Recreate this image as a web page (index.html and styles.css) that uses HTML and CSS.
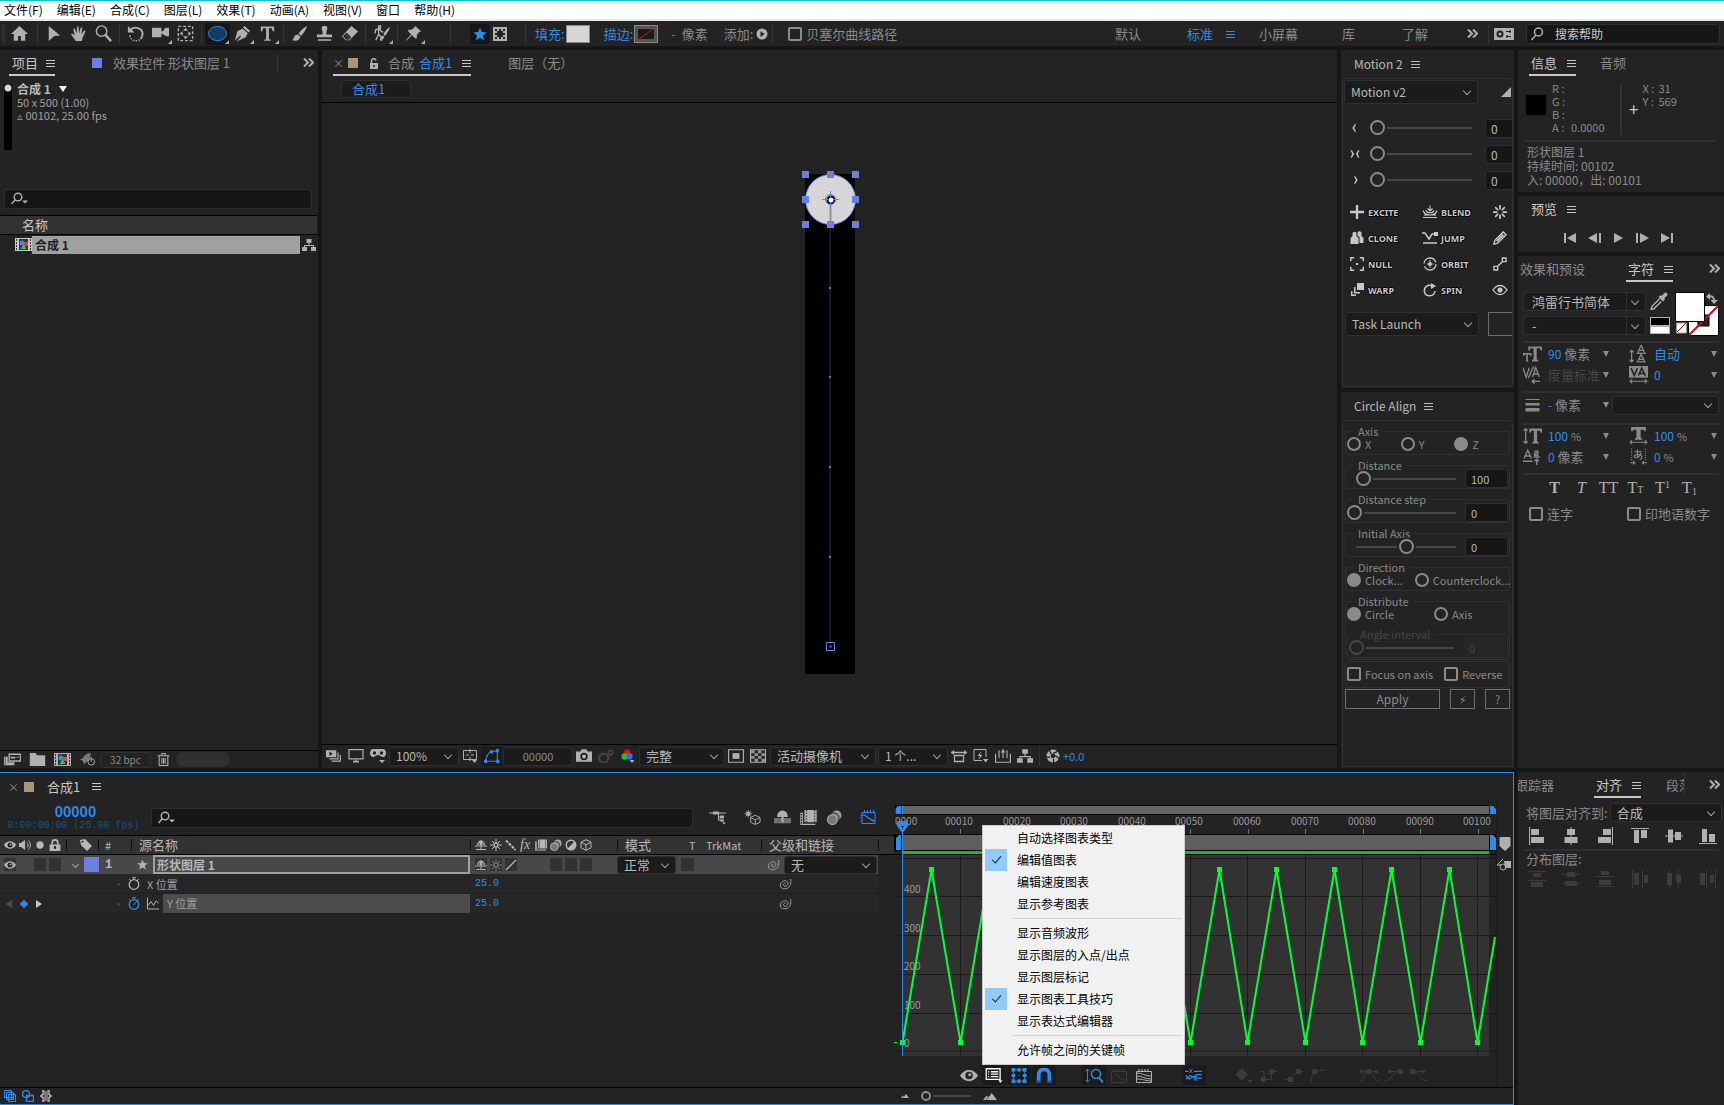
FILE: index.html
```html
<!DOCTYPE html>
<html lang="zh-CN">
<head>
  <meta charset="UTF-8">
  <meta name="viewport" content="width=device-width, initial-scale=1.0">
  <title>合成 1</title>
  <link rel="stylesheet" href="styles.css">
</head>
<body>
  <!-- icon sprite -->
  <svg class="sprite" aria-hidden="true">
    <symbol id="i-menu" viewBox="0 0 9 9"><path d="M0 1.500h9M0 4.500h9M0 7.500h9" stroke="currentColor"/></symbol>
    <symbol id="i-more" viewBox="0 0 11 9"><path d="M1 .5L5 4.5L1 8.500M6 .5L10 4.500L6 8.500" stroke="currentColor" stroke-width="2" fill="none"/></symbol>
    <symbol id="i-home" viewBox="0 0 20 20"><path d="M10 2L1 10.500h3V17.500h4.500v-5h3v5H16v-7h3z"/></symbol>
    <symbol id="i-arrow" viewBox="0 0 20 20"><path d="M5 2l12 10-6 .5L5 18z"/></symbol>
    <symbol id="i-hand" viewBox="0 0 20 20"><path d="M7 18c-1-3-4-5-5-7.500l1.500-.5L6 12 4.500 5l1.500-.5L8 10l.5-7.500h1.500l.5 7.500L12.500 3.500l1.500.5-1 7 3-4.500 1.500 1L14.500 14l-1 4z"/></symbol>
    <symbol id="i-zoom" viewBox="0 0 20 20"><circle cx="8" cy="7.500" r="5.500" fill="none" stroke="currentColor" stroke-width="1.500"/><path d="M12 11.500l6 6.500" stroke="currentColor" stroke-width="2.500"/></symbol>
    <symbol id="i-rotate" viewBox="0 0 20 20"><path d="M5 6c4-4 12-2 12.500 4 0 3-1 4-2 5.500" fill="none" stroke="currentColor" stroke-width="2"/><path d="M2 2v7h7z"/><path d="M4 12c1 7 9 7 12 3" fill="none" stroke="currentColor" stroke-width="1.500" stroke-dasharray="1.500 1.500"/></symbol>
    <symbol id="i-cam" viewBox="0 0 20 20"><path d="M1 4h10v4l2-1 2-3h4v9h-3l-3-2-2-1v4H1z"/></symbol>
    <symbol id="i-pan" viewBox="0 0 20 20"><path d="M2.500 2.500h15v15h-15z" fill="none" stroke="currentColor" stroke-width="1.500" stroke-dasharray="3 2"/><path d="M10 4l2.500 3h-5zM10 16l2.500-3h-5zM4 10l3-2.500v5zM16 10l-3-2.500v5z"/></symbol>
    <symbol id="i-ellipse" viewBox="0 0 20 20"><ellipse cx="10" cy="10" rx="9.500" ry="7.500" fill="#123c66" stroke="#2d8ceb"/></symbol>
    <symbol id="i-pen" viewBox="0 0 20 20"><path d="M12 2l6 5-1.500 2-6-5zM10 5l5.500 4.500-2 4.500-9.500 4.500L8.500 13l-1-1L2 17.500 4.500 7.500z"/></symbol>
    <symbol id="i-type" viewBox="0 0 20 20"><path d="M3 2.500h14v5h-1.500L14.500 4.500h-3v11.500l2 .5v1h-7v-1l2-.5V4.500h-3L4.500 7.500H3z"/></symbol>
    <symbol id="i-brush" viewBox="0 0 20 20"><path d="M18 2c-4 2-7 5-9 8l2.500 2.500C14 10 17 6 18 2zM8 11c-4 0-3 4-6 6 4 1 8 1 9-3.500z"/></symbol>
    <symbol id="i-stamp" viewBox="0 0 20 20"><path d="M8 9c0-2-1-3-1-4.500 0-3.500 6-3.500 6 0C13 6 12 7 12 9v2h6v3H2v-3h6zM3 16h14v1.500H3z"/></symbol>
    <symbol id="i-eraser" viewBox="0 0 20 20"><path d="M12 2l7 6-9 9H6l-4-4z"/><path d="M3 13l4-4 5 5-2.500 2.500H6.500z" fill="#333"/></symbol>
    <symbol id="i-roto" viewBox="0 0 20 20"><path d="M7 2h2v2H7zM3 10l1-4 4-1 2 3 2 .5M7 5v6l3 3v4M7 11l-3 6" fill="none" stroke="currentColor" stroke-width="1.500"/><path d="M19 3c-3 2-6 5-7 8l1.500 1.500C16 10 18 7 19 3zM11 12c-2 0-2 3-3 5 3 0 4.500-1 5-3.500z"/></symbol>
    <symbol id="i-pin" viewBox="0 0 20 20"><path d="M12 2l6 6-2 .5-2.500 3v3.500l-2 0-3-3.500-6 6-.5-.5L7.500 11 4.500 8V6h3.500l3-2.500z"/></symbol>
    <symbol id="i-star" viewBox="0 0 20 20"><path d="M10 1l2.700 6.300 6.800.5-5.200 4.500 1.700 6.700-6-3.700-6 3.700 1.700-6.700L.5 7.800l6.800-.5z"/></symbol>
    <symbol id="i-checker" viewBox="0 0 14 14"><path d="M0 0h14v14H0z"/><path d="M2 2h2v2H2zM6 2h2v2H6zM10 2h2v2h-2zM4 4h6v6H4zM2 6h2v2H2zM10 6h2v2h-2zM2 10h2v2H2zM6 10h2v2H6zM10 10h2v2h-2z" fill="#222"/></symbol>
    <symbol id="i-add" viewBox="0 0 12 12"><circle cx="6" cy="6" r="5.500"/><path d="M4.500 3l4 3-4 3z" fill="#222"/></symbol>
    <symbol id="i-sync" viewBox="0 0 20 14"><rect x="0" y="1" width="20" height="12" rx="1"/><path d="M12 4.500h5M12 9.500h5M16 3v3M13 8v3" stroke="#222"/><circle cx="6" cy="7" r="2.500" fill="none" stroke="#222" stroke-width="2"/></symbol>
    <symbol id="i-search" viewBox="0 0 18 14"><circle cx="7.500" cy="5" r="4" fill="none" stroke="currentColor" stroke-width="1.500"/><path d="M5 8l-4.500 5" stroke="currentColor" stroke-width="1.500"/></symbol>
    <symbol id="i-find" viewBox="0 0 18 14"><circle cx="7" cy="5" r="3.800" fill="none" stroke="currentColor" stroke-width="1.400"/><path d="M4.500 7.500L.5 12" stroke="currentColor" stroke-width="1.500"/><path d="M11 8.500h6l-3 3z"/></symbol>
    <symbol id="i-tree" viewBox="0 0 14 12"><path d="M4.500 0h5v4h-5zM0 8h5v4H0zM9 8h5v4H9zM6.500 4h1v2h4.500v2h-1V7H3v1H2V6h4.500z"/></symbol>
    <symbol id="i-comp" viewBox="0 0 17 13"><path d="M0 0h17v13H0z"/><path d="M4 1h9v11H4z" fill="#333"/><path d="M1.500 1v11M15.500 1v11" stroke="#333" stroke-dasharray="2 1"/><circle cx="7" cy="5" r="2.500" fill="#2d8ceb"/><path d="M9 4h4v4H9z" fill="#f33"/><path d="M8.500 6l3 5h-6z" fill="#2c4"/></symbol>
    <symbol id="i-footage" viewBox="0 0 18 12"><path d="M5.500.5h12v7h-12z" fill="none" stroke="currentColor" stroke-width="1.500"/><path d="M7 3h5v2H7zM13 3h3v1h-3zM0 3h4v6h7v3H0z"/><path d="M1.500 4v7" stroke="#222" stroke-dasharray="1 1"/></symbol>
    <symbol id="i-folder" viewBox="0 0 13 11"><path d="M0 0h5l1 2h7v9H0z"/></symbol>
    <symbol id="i-rocket" viewBox="0 0 17 14"><path d="M12 0c-5 0-8 4-9 6L0 7l3 1 2 4 2-2c3-2 5-5 5-10z" opacity=".6"/><circle cx="12.500" cy="9.500" r="3.500" fill="#232323" stroke="currentColor"/><path d="M12.500 4.500v5" stroke="currentColor"/></symbol>
    <symbol id="i-trash" viewBox="0 0 11 12"><path d="M0 2.500h11M4 2V.5h3V2M1.500 3v8.500h8V3M4 4.500V10M5.500 4.500V10M7 4.500V10" fill="none" stroke="currentColor"/></symbol>
    <symbol id="i-lockopen" viewBox="0 0 10 11"><path d="M1 5h8v6H1z"/><path d="M2.500 5V3c0-3 4-3 4.500-.5" fill="none" stroke="currentColor" stroke-width="1.500"/><path d="M5 7v2" stroke="#222" stroke-width="1.500"/></symbol>
    <symbol id="i-lock" viewBox="0 0 10 11"><path d="M0 5h10v6H0z"/><path d="M2.500 5V3c0-3 5-3 5 0v2" fill="none" stroke="currentColor" stroke-width="1.500"/><path d="M5 6.500v2.500" stroke="#222" stroke-width="2"/></symbol>
    <symbol id="i-always" viewBox="0 0 14 12"><path d="M0 1h9v6H0zM10 3h1v6H3V8h7zM12 5h1v6H5v-1h7z"/><path d="M3 2l3 2-3 2z" fill="#222"/></symbol>
    <symbol id="i-monitor" viewBox="0 0 13 12"><path d="M.5.5h12v8H.5z" fill="none" stroke="currentColor"/><path d="M6 9h1v1h2v1.500H4V10h2z"/></symbol>
    <symbol id="i-mask" viewBox="0 0 16 14"><path d="M3 0h10c4 0 4 8 0 8-2 0-3-2-5-2S5 8 3 8C-1 8-1 0 3 0zM9 11h6l-3 3z"/><circle cx="4.500" cy="4" r="1.700" fill="#222"/><circle cx="11.500" cy="4" r="1.700" fill="#222"/></symbol>
    <symbol id="i-guides" viewBox="0 0 14 14"><path d="M.5 1.500h13v9H.5zM7 0v4M7 8v4M3 6h3M8 6h3" fill="none" stroke="currentColor"/><path d="M9 11h5l-2.500 3z"/></symbol>
    <symbol id="i-shape" viewBox="0 0 15 13"><path d="M1.500 11.500h11V2H7C3 4 2 7 1.500 11.500z" fill="none" stroke="currentColor"/><path d="M0 10h3v3H0zM11.500 10h3v3h-3zM11 0h3v3h-3zM5.500 1h3v3h-3z"/></symbol>
    <symbol id="i-snap" viewBox="0 0 14 12"><path d="M0 2h4l1-2h4l1 2h4v9H0z"/><circle cx="7" cy="6.500" r="2.500" fill="none" stroke="#222" stroke-width="1.500"/></symbol>
    <symbol id="i-eyes" viewBox="0 0 14 12"><circle cx="5" cy="8" r="4" fill="none" stroke="currentColor" stroke-width="2"/><circle cx="11" cy="3" r="2" fill="none" stroke="currentColor" stroke-width="1.500"/></symbol>
    <symbol id="i-rgb" viewBox="0 0 13 14"><circle cx="5.500" cy="3.500" r="3.200" fill="#f00"/><circle cx="3.200" cy="7.500" r="3.200" fill="#1c1"/><circle cx="8" cy="7.500" r="3.200" fill="#36f"/><path d="M8 11h5l-2.500 3z"/></symbol>
    <symbol id="i-roi" viewBox="0 0 14 12"><path d="M.5.500h13v11H.5z" fill="none" stroke="currentColor"/><path d="M4 3.500h6v5H4z"/></symbol>
    <symbol id="i-grid" viewBox="0 0 14 12"><path d="M.5.500h13v11H.5z" fill="none" stroke="currentColor"/><path d="M1 1h3v2.500H1zM7 1h3v2.500H7zM4 3.500h3V6H4zM10 3.500h3V6h-3zM1 6h3v2.500H1zM7 6h3v2.500H7zM4 8.500h3V11H4zM10 8.500h3V11h-3z" opacity=".8"/></symbol>
    <symbol id="i-ratio" viewBox="0 0 16 12"><path d="M0 2.500h16M3.500 5.500h9v6h-9z" fill="none" stroke="currentColor" stroke-width="1.300"/><path d="M0 2.500L3 0v5zM16 2.500L13 0v5z"/></symbol>
    <symbol id="i-fast" viewBox="0 0 15 14"><path d="M12.500 8V.500H.5v11h8" fill="none" stroke="currentColor"/><path d="M8 2L4 7h2.500L5 11l4-5H6.500zM9.500 10H15l-3 3.500z"/></symbol>
    <symbol id="i-tlbtn" viewBox="0 0 14 12"><path d="M.5 4v7.500h13V4M3.500 1v7M7 0v8M10.500 1v7" fill="none" stroke="currentColor"/><path d="M5 3l2-3 2 3z"/></symbol>
    <symbol id="i-aperture" viewBox="0 0 13 13"><circle cx="6.500" cy="6.500" r="6"/><path d="M6.500 4l5-2M8.500 6l4 3M7 9l0 4M4 7.500l-4 0M5 5L3 1" stroke="#222" stroke-width="1.200"/><circle cx="6.500" cy="6.500" r="2" fill="#222"/></symbol>
    <symbol id="i-eye" viewBox="0 0 12 8"><path d="M0 4c3-5 9-5 12 0-3 5-9 5-12 0z"/><circle cx="6" cy="4" r="2.500" fill="#222"/><circle cx="6.500" cy="3.500" r="1"/></symbol>
    <symbol id="i-speaker" viewBox="0 0 12 10"><path d="M0 3h2l4-3v10L2 7H0z"/><path d="M8 2.500c1.500 1.500 1.500 3.500 0 5M9.500.500c2.500 2.500 2.500 6.500 0 9" fill="none" stroke="currentColor"/></symbol>
    <symbol id="i-dot" viewBox="0 0 8 8"><circle cx="4" cy="4" r="3.700"/></symbol>
    <symbol id="i-tag" viewBox="0 0 12 12"><path d="M0 1l5-1 7 7-5 5-6-6z"/><circle cx="2.500" cy="2.800" r="1" fill="#222"/></symbol>
    <symbol id="i-shy" viewBox="0 0 12 10"><path d="M2 5c0-6 8-6 8 0zM5.500 0h1v10h-1zM0 5.500h12v1H0zM1 9h10v1H1z"/><path d="M4 2.500v2.500M8 2.500v2.500" stroke="#333"/></symbol>
    <symbol id="i-sun" viewBox="0 0 12 12"><circle cx="6" cy="6" r="2" fill="none" stroke="currentColor" stroke-width="1.300"/><path d="M6 0v3M6 9v3M0 6h3M9 6h3M2 2l2 2M8 8l2 2M10 2L8 4M4 8l-2 2" stroke="currentColor"/></symbol>
    <symbol id="i-quality" viewBox="0 0 12 12"><path d="M1 1.500l9.500 9.500" stroke="currentColor" stroke-width="2" stroke-dasharray="3 1"/></symbol>
    <symbol id="i-slash" viewBox="0 0 12 12"><path d="M1 11L11 1" stroke="currentColor" stroke-width="1.500"/></symbol>
    <symbol id="i-film" viewBox="0 0 12 11"><path d="M3 0h9v9H3zM0 2h2v9H0zM2 10h9v1H2z"/><path d="M4.500 0v9M10.500 0v9" stroke="#333" stroke-dasharray="1 1"/><path d="M1 3v7" stroke="#333" stroke-dasharray="1 1"/></symbol>
    <symbol id="i-blur" viewBox="0 0 14 14"><circle cx="9" cy="5" r="4.500" opacity=".9"/><circle cx="7" cy="7" r="4.500" fill="#777" stroke="#333" stroke-width=".7"/><circle cx="5" cy="9" r="4.500" fill="#777" stroke="currentColor"/></symbol>
    <symbol id="i-adjust" viewBox="0 0 12 12"><circle cx="6" cy="6" r="4.800" fill="none" stroke="currentColor" stroke-width="1.400"/><path d="M9.500 2.500a5 5 0 0 1-7 7z"/></symbol>
    <symbol id="i-cube" viewBox="0 0 12 12"><path d="M6 .7l5 2.500v5.600l-5 2.500-5-2.500V3.200zM1 3.200l5 2.500 5-2.500M6 5.700v5.600" fill="none" stroke="currentColor"/></symbol>
    <symbol id="i-whip" viewBox="0 0 14 12"><path d="M7.500 6c-.5-1.500-2.500-.5-2 1 .5 2 4 1.500 4.500-1 .5-3-3-4-5.500-2.500C1.500 5 1.500 9 4.500 10.500c3 1 7-.5 8-4 .5-2 .3-4 0-5.500" fill="none" stroke="currentColor"/></symbol>
    <symbol id="i-watch" viewBox="0 0 12 13"><circle cx="6" cy="7.500" r="4.800" fill="none" stroke="currentColor" stroke-width="1.300"/><path d="M4 .7h4M6 1v2M1 2l2 2M11 2L9 4" stroke="currentColor"/></symbol>
    <symbol id="i-watchon" viewBox="0 0 12 13"><circle cx="6" cy="7.500" r="4.800" fill="none" stroke="currentColor" stroke-width="1.300"/><path d="M4 .7h4M6 1v2M1 2l2 2M11 2L5.500 8" stroke="currentColor"/></symbol>
    <symbol id="i-curve" viewBox="0 0 12 12"><path d="M.5 0v11.500H12M1 8l3-4 2.500 4L9 3.500l2.500 2" fill="none" stroke="currentColor"/></symbol>
    <symbol id="i-flow" viewBox="0 0 17 14"><path d="M0 2h17v1H0zM4 1h6v3H4zM9 3h1v7H9zM9 6h3v1H9zM9 9h3v1H9zM11 5h4v3h-4zM11 9h4v2h-4zM13 12h4l-2 2z"/></symbol>
    <symbol id="i-draft" viewBox="0 0 17 16"><circle cx="4" cy="4" r="2.500"/><path d="M4 0v8M0 4h8M1 1l6 6M7 1L1 7" stroke="currentColor" stroke-width=".8"/><path d="M11.500 5.500l5 2.500v5l-5 2.500-5-2.500V8zM6.500 8l5 2.500 5-2.500M11.500 10.500v5" fill="#232323" stroke="currentColor"/></symbol>
    <symbol id="i-hide" viewBox="0 0 16 13"><path d="M3 6c0-8 10-8 10 0zM7 0h2v11H7z"/><path d="M0 7h16v5H0z" opacity=".55"/><path d="M7.500 6h1v5h-1z"/></symbol>
    <symbol id="i-graphed" viewBox="0 0 16 15"><path d="M1.500 2.500h13v11h-13zM4 0v2M7 0v2M10 0v2M13 0v2M0 5h1M0 8h1M0 11h1" fill="none" stroke="currentColor"/><path d="M1.500 5C6 4 8 10 14 11" fill="none" stroke="currentColor" stroke-width="1.400"/></symbol>
    <symbol id="i-dup" viewBox="0 0 12 12"><path d="M.5.500h7v7h-7zM2.500 2.500h7v7h-7zM4.500 4.500h7v7h-7z" fill="#232323" stroke="currentColor"/><path d="M8 6.500v3M6.500 8h3" stroke="currentColor"/></symbol>
    <symbol id="i-modes" viewBox="0 0 12 12"><circle cx="4" cy="4" r="3.500" fill="none" stroke="currentColor" stroke-width="1.300"/><path d="M4.500 5.500h7v6h-7z" fill="none" stroke="currentColor" stroke-width="1.300"/><path d="M5 5h3v2H5z"/></symbol>
    <symbol id="i-brace" viewBox="0 0 12 12"><path d="M4.500.5H3v4L.5 6 3 7.500v4h1.500M7.500.500H9v4L11.500 6 9 7.500v4H7.500" fill="none" stroke="currentColor" stroke-width="1.500"/><path d="M4 1h4v10H4z" opacity=".6"/></symbol>
    <symbol id="i-list" viewBox="0 0 16 14"><path d="M.7.700h13v10H.7zM5 3.500h7M5 5.700h7M5 8h7M2.500 3.500h1M2.500 5.700h1M2.500 8h1" fill="none" stroke="currentColor" stroke-width="1.200"/><path d="M12 11.500h4L14 14z"/></symbol>
    <symbol id="i-bbox" viewBox="0 0 16 16"><path d="M2 2h12v12H2z" fill="none" stroke="currentColor"/><path d="M0 0h4v4H0zM12 0h4v4h-4zM0 12h4v4H0zM12 12h4v4h-4zM6.500 0h3v4h-3zM6.500 12h3v4h-3zM0 6.500h4v3H0zM12 6.500h4v3h-4zM7.500 7.500h1v1h-1z"/></symbol>
    <symbol id="i-magnet" viewBox="0 0 14 14"><path d="M2 12V6.500C2-.5 12-.5 12 6.500V12" fill="none" stroke="currentColor" stroke-width="3.500"/><path d="M0 12h4v2H0zM10 12h4v2h-4z" opacity=".5"/></symbol>
    <symbol id="i-fitv" viewBox="0 0 18 15"><path d="M2.500 1v13M0 3.500L2.500 1 5 3.500M0 11.500L2.500 14 5 11.500" fill="none" stroke="currentColor"/><circle cx="11" cy="6" r="4.500" fill="none" stroke="currentColor" stroke-width="1.500"/><path d="M14 9.500l4 5" stroke="currentColor" stroke-width="2"/></symbol>
    <symbol id="i-fitsel" viewBox="0 0 18 15"><path d="M1.500 3.500h15v11h-15zM4 1v2M7 1v2M10 1v2M13 1v2M4 6c5 0 5 6 11 6" fill="none" stroke="currentColor"/></symbol>
    <symbol id="i-fitall" viewBox="0 0 18 15"><path d="M1.500 3.500h15v11h-15zM4 1v2M7 1v2M10 1v2M13 1v2M2 5c5 0 8 3 14 3M2 8c5 0 8 3 14 3M2 11c4 0 6 1 14 2" fill="none" stroke="currentColor"/></symbol>
    <symbol id="i-sepdim" viewBox="0 0 20 14"><path d="M0 2.500h4M10 2.500h9M1 11l5-4 5 3 8 0M1 7l4 4 8-5h6" fill="none" stroke="currentColor" stroke-width="1.300"/><path d="M5 0l3 4M8 0L5 4M10 8h3l-3 4h4" fill="none" stroke="currentColor"/></symbol>
    <symbol id="i-key" viewBox="0 0 16 14"><path d="M6 0l6 6-6 6-6-6zM11 11h5l-2.500 3z"/></symbol>
    <symbol id="i-hold" viewBox="0 0 18 13"><path d="M0 2.500h4v8h7.500v-8H18" fill="none" stroke="currentColor"/><path d="M1 8h5v5H1zM9 0h5v5H9z"/></symbol>
    <symbol id="i-linear" viewBox="0 0 18 13"><path d="M0 10.500h4l9-8h5" fill="none" stroke="currentColor"/><path d="M3 8h5v5H3zM11 0h5v5h-5z"/></symbol>
    <symbol id="i-auto" viewBox="0 0 18 13"><path d="M1 13c0-8 4-12 15-12" fill="none" stroke="currentColor"/><path d="M2 0h5v5H2z"/></symbol>
    <symbol id="i-ease" viewBox="0 0 18 13"><path d="M0 2.500h18M0 12c4 0 4-8 6-9.500h6C14 4 14 12 18 12" fill="none" stroke="currentColor"/><path d="M6.500 0h5v5h-5zM0 1h3v3H0zM15 1h3v3h-3z"/></symbol>
    <symbol id="i-easein" viewBox="0 0 18 13"><path d="M0 12c8 0 6-9.500 15-9.500H3" fill="none" stroke="currentColor"/><path d="M13 0h5v5h-5zM3 1h3v3H3z"/></symbol>
    <symbol id="i-easeout" viewBox="0 0 18 13"><path d="M14 2.500H2c9 0 7 9.500 16 9.500" fill="none" stroke="currentColor"/><path d="M0 0h5v5H0zM12 1h3v3h-3z"/></symbol>
    <symbol id="i-mtn" viewBox="0 0 16 8"><path d="M4 8l6-8 6 8zM0 8l4-5 2 1.500L3 8z"/></symbol>
    <symbol id="i-marker" viewBox="0 0 11 14"><path d="M0 1l1-1h9l1 1v8l-5.500 5L0 9z"/></symbol>
    <symbol id="i-bin" viewBox="0 0 14 12"><path d="M7 2h7v7H8z" /><circle cx="6" cy="8" r="3" fill="none" stroke="currentColor"/><path d="M0 6l6-6M0 6h5" stroke="currentColor"/></symbol>
    <symbol id="i-first" viewBox="0 0 13 10"><path d="M0 0h2v10H0zM12 0v10L3 5z"/></symbol>
    <symbol id="i-prev" viewBox="0 0 13 10"><path d="M11 0h2v10h-2zM9 0v10L0 5z"/></symbol>
    <symbol id="i-play" viewBox="0 0 13 10"><path d="M2 0l9 5-9 5z"/></symbol>
    <symbol id="i-next" viewBox="0 0 13 10"><path d="M0 0h2v10H0zM4 0l9 5-9 5z"/></symbol>
    <symbol id="i-last" viewBox="0 0 13 10"><path d="M11 0h2v10h-2zM1 0l9 5-9 5z"/></symbol>
    <symbol id="i-dropper" viewBox="0 0 16 16"><path d="M9 3l2 0c2-3 3-3 4-2s1 2-2 4l0 2-1.500 1.500-4-4z"/><path d="M8.500 6L2 12.500 1 15.500l2.500-.5L10 8.500" fill="none" stroke="currentColor" stroke-width="1.300"/></symbol>
    <symbol id="i-ein" viewBox="0 0 10 8"><path d="M6.500 0h-2L2 4l2.500 4h2l-2-4z" stroke="#000" stroke-width=".5"/></symbol>
    <symbol id="i-eboth" viewBox="0 0 10 8"><path d="M0 0h2l2.500 4L2 8H0l2-4zM10 0H8L5.500 4 8 8h2L8 4z" stroke="#000" stroke-width=".5"/></symbol>
    <symbol id="i-eout" viewBox="0 0 10 8"><path d="M3.500 0h2L8 4 5.500 8h-2l2-4z" stroke="#000" stroke-width=".5"/></symbol>
    <symbol id="i-excite" viewBox="0 0 12 12"><path d="M5 0h2v5h5v2H7v5H5V7H0V5h5z"/></symbol>
    <symbol id="i-blend" viewBox="0 0 16 13"><path d="M8 0v5M5.500 3L8 5.500 10.500 3M1 5c2 6 12 6 14 0M4 5c1 3 7 3 8 0M1 12h14M2 9.500h12" fill="none" stroke="currentColor" stroke-width="1.100"/></symbol>
    <symbol id="i-burst" viewBox="0 0 16 16"><path d="M8 0v5M8 11v5M0 8h5M11 8h5M2.500 2.500L6 6M10 10l3.500 3.500M13.500 2.500L10 6M6 10l-3.500 3.500" stroke="currentColor" stroke-width="2"/></symbol>
    <symbol id="i-clone" viewBox="0 0 13 14"><path d="M2 3c0-3 4-3 4 0v2l2 2v6H0V7l2-2z"/><path d="M7 2c0-3 5-2 4 1v2l2 2v5H9V6L7 4.500z"/></symbol>
    <symbol id="i-jump" viewBox="0 0 16 12"><path d="M0 1h3l4 6 3-5h3M1 11h14" fill="none" stroke="currentColor" stroke-width="1.500"/><path d="M12 0h4v4h-4z"/></symbol>
    <symbol id="i-pencil" viewBox="0 0 15 15"><path d="M1 14l1-4 9-9 3 3-9 9z" fill="none" stroke="currentColor" stroke-width="1.500"/><path d="M4 11l7-7" stroke="currentColor" stroke-width="2"/></symbol>
    <symbol id="i-null" viewBox="0 0 13 13"><path d="M.7 4V.700H4M9 .700h3.300V4M12.300 9v3.300H9M4 12.300H.700V9" fill="none" stroke="currentColor" stroke-width="1.400"/><path d="M5.500 5.500h2v2h-2z"/></symbol>
    <symbol id="i-orbit" viewBox="0 0 14 14"><circle cx="7" cy="7" r="6" fill="none" stroke="currentColor" stroke-width="1.300" stroke-dasharray="16 3"/><circle cx="7" cy="7" r="2"/><path d="M7 3v8M3.500 7h7" stroke="currentColor" stroke-width=".8"/></symbol>
    <symbol id="i-link" viewBox="0 0 15 15"><path d="M10 1h4v4h-4zM1 10h4v4H1zM5 10l5-5" fill="none" stroke="currentColor" stroke-width="1.500"/></symbol>
    <symbol id="i-warp" viewBox="0 0 14 14"><path d="M7 0h7v7H7zM4 4h1.500v5H10v1.500H4zM1 8h1.500v3.500H6V13H1z"/></symbol>
    <symbol id="i-spin" viewBox="0 0 14 14"><path d="M12 8c-1 6-9 6.500-10.500 1C.5 4 5 1 9 3" fill="none" stroke="currentColor" stroke-width="1.500"/><path d="M8 0l5 3-5 3z"/></symbol>
    <symbol id="i-look" viewBox="0 0 16 12"><path d="M1 6c4-6 10-6 14 0-4 6-10 6-14 0z" fill="none" stroke="currentColor" stroke-width="1.300"/><circle cx="8" cy="6" r="2.500"/></symbol>
    <!-- character panel -->
    <symbol id="c-size" viewBox="0 0 18 16"><path d="M5 1h13v4h-1l-1-2.500h-3V13l1.500 1v1h-6v-1l1.500-1V2.500H7L6 5H5zM0 7h8v3H7l-.5-1.500h-2V14l1 1H2.500L3 14V8.500H1.500L1 10H0z"/></symbol>
    <symbol id="c-lead" viewBox="0 0 18 17"><path d="M2.500 5v11M.5 7l2-2 2 2M.5 14l2 2 2-2M7 16h9M7 8h9M8.500 7L11.500 0l3 7M9.500 5h4M8.500 15l3-6 3 6M9.500 13.500h4" fill="none" stroke="currentColor" stroke-width="1.200"/></symbol>
    <symbol id="c-kern" viewBox="0 0 18 16"><path d="M0 1l3 9L6 1M5 11L10 0M9 10l3-9 3.500 9M10 7h4M9 14h7M11 12l-2.500 2 2.500 2" fill="none" stroke="currentColor" stroke-width="1.300"/></symbol>
    <symbol id="c-track" viewBox="0 0 18 17"><path d="M0 0h18v11H0z"/><path d="M2 2l3 7 3-7M9 9l3-7 3.500 7M10 7h4.500" fill="none" stroke="#232323" stroke-width="1.500"/><path d="M1 14.500h16M3 12.500l-2 2 2 2M15 12.500l2 2-2 2" fill="none" stroke="currentColor"/></symbol>
    <symbol id="c-stroke" viewBox="0 0 16 13"><path d="M1 0h14v1H1zM1 4h14v2.500H1zM1 9h14v3.500H1z"/></symbol>
    <symbol id="c-vscale" viewBox="0 0 18 16"><path d="M2.500 1v14M.5 3l2-2 2 2M.5 13l2 2 2-2" fill="none" stroke="currentColor" stroke-width="1.200"/><path d="M6 1h12v4h-1l-1-2h-2.700v10l1.500 1v1h-6v-1l1.500-1V3H8L7 5H6z"/></symbol>
    <symbol id="c-hscale" viewBox="0 0 18 17"><path d="M2 0h14v4h-1.500L14 2.500h-3V10l1.500 1v1h-7v-1L7 10V2.500H4L3.500 4H2z"/><path d="M1 14.500h16M3 12.500l-2 2 2 2M15 12.500l2 2-2 2" fill="none" stroke="currentColor"/></symbol>
    <symbol id="c-base" viewBox="0 0 18 15"><path d="M1 9l3.500-8L8 9M2.500 6.500h4M0 11.500h9M10 7.500h6M11 2h3v4h-3V4h3M13 15V9.500M11 11.500l2-2 2 2" fill="none" stroke="currentColor" stroke-width="1.300"/></symbol>
    <symbol id="c-tsume" viewBox="0 0 18 16"><path d="M2.500 0v11M15.500 0v11" stroke="currentColor" stroke-dasharray="1 1"/><path d="M5 3h7M8 1v8M11 4c0 4-5 6-6 4s6-4 7-1-1 3-2 3M1 13.500h4M17 13.500h-4M4 12l1.500 1.500L4 15M14 12l-1.500 1.500L14 15" fill="none" stroke="currentColor"/></symbol>
    <!-- align panel -->
    <symbol id="a-left" viewBox="0 0 18 18"><path d="M1 0h1v18H1zM3 2h8v6H3zM3 10h13v6H3z"/></symbol>
    <symbol id="a-hc" viewBox="0 0 18 18"><path d="M8.500 0h1v18h-1zM5 2h8v6H5zM2.500 10h13v6h-13z"/></symbol>
    <symbol id="a-right" viewBox="0 0 18 18"><path d="M16 0h1v18h-1zM7 2h8v6H7zM2 10h13v6H2z"/></symbol>
    <symbol id="a-top" viewBox="0 0 18 18"><path d="M0 1h18v1H0zM3 3h5v13H3zM10 3h6v8h-6z"/></symbol>
    <symbol id="a-vc" viewBox="0 0 18 18"><path d="M0 8.500h18v1H0zM3 2.500h5v13H3zM10 5h6v8h-6z"/></symbol>
    <symbol id="a-bottom" viewBox="0 0 18 18"><path d="M0 16h18v1H0zM3 2h5v13H3zM10 7h6v8h-6z"/></symbol>
    <symbol id="d-top" viewBox="0 0 18 18"><path d="M0 1h18v1H0zM5 3h8v4H5zM0 10h18v1H0zM3 12h12v5H3z"/></symbol>
    <symbol id="d-vc" viewBox="0 0 18 18"><path d="M0 4h18v1H0zM5 2h8v5H5zM0 13h18v1H0zM3 11h12v5H3z"/></symbol>
    <symbol id="d-bottom" viewBox="0 0 18 18"><path d="M0 6h18v1H0zM5 1h8v4H5zM0 16h18v1H0zM3 10h12v5H3z"/></symbol>
    <symbol id="d-left" viewBox="0 0 18 18"><path d="M1 0h1v18H1zM3 3h5v12H3zM11 0h1v18h-1zM13 5h4v8h-4z"/></symbol>
    <symbol id="d-hc" viewBox="0 0 18 18"><path d="M4 0h1v18H4zM2 3h5v12H2zM13 0h1v18h-1zM11 5h5v8h-5z"/></symbol>
    <symbol id="d-right" viewBox="0 0 18 18"><path d="M7 0h1v18H7zM1 3h5v12H1zM16 0h1v18h-1zM11 5h4v8h-4z"/></symbol>
  </svg>

  <nav class="menubar">
    <a href="#">文件(F)</a>
    <a href="#">编辑(E)</a>
    <a href="#">合成(C)</a>
    <a href="#">图层(L)</a>
    <a href="#">效果(T)</a>
    <a href="#">动画(A)</a>
    <a href="#">视图(V)</a>
    <a href="#">窗口</a>
    <a href="#">帮助(H)</a>
  </nav>

  <header class="toolbar">
    <span class="grip"></span>
    <button class="tool home" aria-label="主页"><svg><use href="#i-home"/></svg></button>
    <i class="sep"></i>
    <button class="tool" aria-label="选取"><svg><use href="#i-arrow"/></svg></button>
    <button class="tool" aria-label="手形"><svg><use href="#i-hand"/></svg></button>
    <button class="tool" aria-label="缩放"><svg><use href="#i-zoom"/></svg></button>
    <i class="sep"></i>
    <button class="tool" aria-label="旋转"><svg><use href="#i-rotate"/></svg></button>
    <button class="tool sub" aria-label="摄像机"><svg><use href="#i-cam"/></svg></button>
    <button class="tool" aria-label="锚点"><svg><use href="#i-pan"/></svg></button>
    <i class="sep"></i>
    <button class="tool sub on" aria-label="椭圆"><svg><use href="#i-ellipse"/></svg></button>
    <button class="tool sub" aria-label="钢笔"><svg><use href="#i-pen"/></svg></button>
    <button class="tool sub" aria-label="文字"><svg><use href="#i-type"/></svg></button>
    <i class="sep"></i>
    <button class="tool" aria-label="画笔"><svg><use href="#i-brush"/></svg></button>
    <button class="tool" aria-label="仿制图章"><svg><use href="#i-stamp"/></svg></button>
    <button class="tool" aria-label="橡皮擦"><svg><use href="#i-eraser"/></svg></button>
    <i class="sep"></i>
    <button class="tool sub" aria-label="Roto 笔刷"><svg><use href="#i-roto"/></svg></button>
    <i class="sep"></i>
    <button class="tool sub" aria-label="操控点"><svg><use href="#i-pin"/></svg></button>
    <div class="shape-opts">
      <button class="mode-star" aria-label="形状"><svg><use href="#i-star"/></svg></button>
      <button class="mode-mask" aria-label="蒙版"><svg><use href="#i-checker"/></svg></button>
      <i class="sep"></i>
      <a href="#" class="blue">填充:</a>
      <button class="fill-swatch" aria-label="填充颜色"></button>
      <a href="#" class="blue stroke-label">描边:</a>
      <button class="stroke-swatch" aria-label="描边颜色"><svg viewBox="0 0 22 16"><path d="M0 16L22 0" stroke="#d01818"/></svg></button>
      <span class="px"><b class="blue">-</b> 像素</span>
      <span class="add">添加:</span>
      <button class="add-btn" aria-label="添加"><svg><use href="#i-add"/></svg></button>
      <i class="sep"></i>
      <label class="check"><input type="checkbox">贝塞尔曲线路径</label>
    </div>
    <nav class="spaces">
      <a href="#" class="sp-default">默认</a>
      <a href="#" class="blue sp-std">标准 <svg class="menu"><use href="#i-menu"/></svg></a>
      <a href="#" class="sp-small">小屏幕</a>
      <a href="#" class="sp-lib">库</a>
      <a href="#" class="sp-learn">了解</a>
      <svg class="more"><use href="#i-more"/></svg>
      <i class="sep"></i>
      <button class="sync" aria-label="同步设置"><svg><use href="#i-sync"/></svg></button>
    </nav>
    <label class="searchbox help"><svg><use href="#i-search"/></svg><input type="text" placeholder="搜索帮助" aria-label="搜索帮助"></label>
  </header>

  <main class="workspace">
    <div class="left-area">
      <div class="upper">
        <section class="panel project">
          <div class="tabs">
            <a href="#" class="tab active">项目 <svg class="menu"><use href="#i-menu"/></svg></a>
            <a href="#" class="tab fx-tab"><i class="swatch blue-sw"></i>效果控件 形状图层 1</a>
            <i class="vline"></i>
            <svg class="more"><use href="#i-more"/></svg>
          </div>
          <div class="item-info">
            <div class="thumb"></div>
            <div class="item-text">
              <strong>合成 1 <i class="tri"></i></strong>
              <span>50 x 500 (1.00)</span>
              <span>▵ 00102, 25.00 fps</span>
            </div>
          </div>
          <label class="searchbox"><svg><use href="#i-find"/></svg><input type="text" aria-label="搜索项目"></label>
          <div class="list-head">名称</div>
          <div class="list-row">
            <svg class="comp-ico"><use href="#i-comp"/></svg>
            <span class="list-name">合成 1</span>
            <svg class="tree-ico"><use href="#i-tree"/></svg>
          </div>
          <div class="project-bar">
            <button aria-label="解释素材"><svg><use href="#i-footage"/></svg></button>
            <button aria-label="新建文件夹"><svg><use href="#i-folder"/></svg></button>
            <button aria-label="新建合成"><svg><use href="#i-comp"/></svg></button>
            <button aria-label="项目设置"><svg><use href="#i-rocket"/></svg></button>
            <button class="bpc">32 bpc</button>
            <button aria-label="删除"><svg><use href="#i-trash"/></svg></button>
            <i class="pill"></i>
          </div>
        </section>

        <section class="panel viewer">
          <div class="tabs">
            <a href="#" class="tab active"><span class="x">×</span><i class="swatch tan-sw"></i><svg class="lock"><use href="#i-lockopen"/></svg><span class="dim">合成</span><span class="blue">合成1</span><svg class="menu"><use href="#i-menu"/></svg></a>
            <a href="#" class="tab layer-tab">图层（无）</a>
          </div>
          <div class="crumbs"><a href="#" class="crumb">合成1</a></div>
          <div class="canvas">
            <svg class="stage" viewBox="0 0 60 510">
              <rect x="5" y="5" width="50" height="500" fill="#000"/>
              <circle cx="30.500" cy="30.500" r="25" fill="#d6d6d6" stroke="#6a7fe0"/>
              <path d="M30.500 36v20" stroke="#8a8fa8" stroke-width="2"/>
              <path d="M30 59v414" stroke="#14152e" stroke-width="2"/>
              <path d="M29 119h2M29 208h2M29 298h2M29 388h2" stroke="#5068d8" stroke-width="2"/>
              <circle cx="31" cy="31" r="3.500" fill="#fff" stroke="#000" stroke-width="2"/>
              <circle cx="30.500" cy="30.500" r="5" fill="none" stroke="#6a7fe0"/>
              <path d="M30.500 22v6M30.500 33v6M22 30.500h6M33 30.500h6" stroke="#6a7fe0"/>
              <path d="M2 2h7v7H2zM27 2h7v7h-7zM52 2h7v7h-7zM2 27h7v7H2zM52 27h7v7h-7zM2 52h7v7H2zM27 52h7v7h-7zM52 52h7v7h-7z" fill="#6a7fe0"/>
              <path d="M26.500 473.500h8v8h-8z" fill="none" stroke="#6a7fe0"/>
              <path d="M29.500 476.500h2v2h-2z" fill="#6a7fe0"/>
            </svg>
          </div>
          <div class="viewer-bar">
            <button aria-label="始终预览"><svg><use href="#i-always"/></svg></button>
            <button aria-label="主查看器"><svg><use href="#i-monitor"/></svg></button>
            <button aria-label="沉浸式"><svg><use href="#i-mask"/></svg></button>
            <span class="dd w70"><select aria-label="放大率"><option>100%</option></select></span>
            <button aria-label="网格"><svg><use href="#i-guides"/></svg></button>
            <button class="on" aria-label="蒙版可见"><svg><use href="#i-shape"/></svg></button>
            <button class="time">00000</button>
            <button aria-label="拍摄快照"><svg><use href="#i-snap"/></svg></button>
            <button class="off" aria-label="显示快照"><svg><use href="#i-eyes"/></svg></button>
            <button aria-label="通道"><svg><use href="#i-rgb"/></svg></button>
            <span class="dd w86"><select aria-label="分辨率"><option>完整</option></select></span>
            <button aria-label="目标区域"><svg><use href="#i-roi"/></svg></button>
            <button aria-label="透明网格"><svg><use href="#i-grid"/></svg></button>
            <span class="dd w106"><select aria-label="3D 视图"><option>活动摄像机</option></select></span>
            <span class="dd w70"><select aria-label="视图布局"><option>1 个...</option></select></span>
            <button aria-label="像素长宽比"><svg><use href="#i-ratio"/></svg></button>
            <button aria-label="快速预览"><svg><use href="#i-fast"/></svg></button>
            <button aria-label="时间轴"><svg><use href="#i-tlbtn"/></svg></button>
            <button aria-label="流程图"><svg><use href="#i-tree"/></svg></button>
            <i class="sep"></i>
            <button class="expo" aria-label="重置曝光度"><svg><use href="#i-aperture"/></svg></button>
            <a href="#" class="blue">+0.0</a>
          </div>
        </section>

        <div class="scripts">
          <section class="panel motion">
            <div class="tabs"><a href="#" class="tab">Motion 2 <svg class="menu"><use href="#i-menu"/></svg></a></div>
            <div class="box">
              <div class="motion-top">
                <span class="dd"><select aria-label="Motion"><option>Motion v2</option></select></span>
                <i class="corner"></i>
              </div>
              <div class="ease-row"><svg><use href="#i-ein"/></svg><input type="range" value="0" aria-label="ease in"><input class="num" type="text" value="0" aria-label="ease in value"></div>
              <div class="ease-row"><svg><use href="#i-eboth"/></svg><input type="range" value="0" aria-label="ease both"><input class="num" type="text" value="0" aria-label="ease both value"></div>
              <div class="ease-row"><svg><use href="#i-eout"/></svg><input type="range" value="0" aria-label="ease out"><input class="num" type="text" value="0" aria-label="ease out value"></div>
              <div class="motion-grid">
                <button><svg><use href="#i-excite"/></svg>EXCITE</button>
                <button><svg><use href="#i-blend"/></svg>BLEND</button>
                <button aria-label="burst"><svg><use href="#i-burst"/></svg></button>
                <button><svg><use href="#i-clone"/></svg>CLONE</button>
                <button><svg><use href="#i-jump"/></svg>JUMP</button>
                <button aria-label="name"><svg><use href="#i-pencil"/></svg></button>
                <button><svg><use href="#i-null"/></svg>NULL</button>
                <button><svg><use href="#i-orbit"/></svg>ORBIT</button>
                <button aria-label="rope"><svg><use href="#i-link"/></svg></button>
                <button><svg><use href="#i-warp"/></svg>WARP</button>
                <button><svg><use href="#i-spin"/></svg>SPIN</button>
                <button aria-label="stare"><svg><use href="#i-look"/></svg></button>
              </div>
              <div class="task">
                <span class="dd"><select aria-label="Task"><option>Task Launch</option></select></span>
                <button aria-label="launch"></button>
              </div>
            </div>
          </section>

          <section class="panel align3d">
            <div class="tabs"><a href="#" class="tab">Circle Align <svg class="menu"><use href="#i-menu"/></svg></a></div>
            <div class="box">
              <fieldset>
                <legend>Axis</legend>
                <div class="frow three">
                  <label><input type="radio" name="axis">X</label>
                  <label><input type="radio" name="axis">Y</label>
                  <label><input type="radio" name="axis" checked>Z</label>
                </div>
              </fieldset>
              <fieldset>
                <legend>Distance</legend>
                <div class="frow in9"><input type="range" value="0" aria-label="Distance"><input class="num" type="text" value="100" aria-label="Distance value"></div>
              </fieldset>
              <fieldset>
                <legend>Distance step</legend>
                <div class="frow"><input type="range" value="0" aria-label="Distance step"><input class="num" type="text" value="0" aria-label="Distance step value"></div>
              </fieldset>
              <fieldset>
                <legend>Initial Axis</legend>
                <div class="frow in9"><input type="range" value="50" aria-label="Initial Axis"><input class="num" type="text" value="0" aria-label="Initial Axis value"></div>
              </fieldset>
              <fieldset>
                <legend>Direction</legend>
                <div class="frow two">
                  <label><input type="radio" name="dir" checked>Clock...</label>
                  <label><input type="radio" name="dir">Counterclock...</label>
                </div>
              </fieldset>
              <fieldset class="outer">
                <legend>Distribute</legend>
                <div class="frow half">
                  <label><input type="radio" name="dist" checked>Circle</label>
                  <label><input type="radio" name="dist">Axis</label>
                </div>
                <fieldset class="inner" disabled>
                  <legend>Angle interval</legend>
                  <div class="frow"><input type="range" value="0" aria-label="Angle interval"><input class="num" type="text" value="0" aria-label="Angle interval value"></div>
                </fieldset>
              </fieldset>
              <div class="opts">
                <label class="check"><input type="checkbox">Focus on axis</label>
                <label class="check"><input type="checkbox">Reverse</label>
              </div>
              <div class="apply-row">
                <button class="apply">Apply</button>
                <button>⚡︎</button>
                <button>?</button>
              </div>
            </div>
          </section>
        </div>
      </div>

      <section class="panel timeline">
        <div class="tabs">
          <span class="x">×</span><i class="swatch tan-sw"></i>
          <a href="#" class="tab">合成1 <svg class="menu"><use href="#i-menu"/></svg></a>
        </div>
        <div class="tl-main">
          <div class="tl-left">
            <div class="tl-tools">
              <div class="tl-time"><b>00000</b><span>0:00:00:00 (25.00 fps)</span></div>
              <label class="searchbox"><svg><use href="#i-find"/></svg><input type="text" aria-label="搜索图层"></label>
              <div class="tl-icons">
                <button aria-label="微型流程图"><svg><use href="#i-flow"/></svg></button>
                <button aria-label="草图 3D"><svg><use href="#i-draft"/></svg></button>
                <button aria-label="消隐"><svg><use href="#i-hide"/></svg></button>
                <button aria-label="帧混合"><svg><use href="#i-film"/></svg></button>
                <button aria-label="运动模糊"><svg><use href="#i-blur"/></svg></button>
                <button class="blue" aria-label="图表编辑器"><svg><use href="#i-graphed"/></svg></button>
              </div>
            </div>
            <table class="layers">
              <colgroup>
                <col class="c-av"><col class="c-tag"><col class="c-num"><col><col class="c-sw"><col class="c-mode"><col class="c-parent"><col class="c-end">
              </colgroup>
              <thead>
                <tr>
                  <th><div class="cell av"><svg><use href="#i-eye"/></svg><svg><use href="#i-speaker"/></svg><svg><use href="#i-dot"/></svg><svg><use href="#i-lock"/></svg></div></th>
                  <th><div class="cell"><i class="bar"></i><svg class="tag"><use href="#i-tag"/></svg></div></th>
                  <th><div class="cell"><i class="bar"></i><span class="hash">#</span></div></th>
                  <th><div class="cell name"><i class="bar"></i>源名称</div></th>
                  <th><div class="cell sw"><i class="bar"></i><svg><use href="#i-shy"/></svg><svg><use href="#i-sun"/></svg><svg><use href="#i-quality"/></svg><em>fx</em><svg><use href="#i-film"/></svg><svg><use href="#i-blur"/></svg><svg><use href="#i-adjust"/></svg><svg><use href="#i-cube"/></svg></div></th>
                  <th><div class="cell mode"><i class="bar"></i><span class="m1">模式</span><span class="m2">T</span><span>TrkMat</span></div></th>
                  <th><div class="cell parent"><i class="bar"></i>父级和链接</div></th>
                  <th><div class="cell"><i class="bar"></i></div></th>
                </tr>
              </thead>
              <tbody>
                <tr class="layer">
                  <td><div class="cell av"><span class="slot"><svg><use href="#i-eye"/></svg></span><span></span><span class="slot"></span><span class="slot"></span></div></td>
                  <td><div class="cell lab"><i class="chev"></i><i class="swatch label-sw"></i></div></td>
                  <td><div class="cell idx">1</div></td>
                  <td><div class="cell lname"><svg><use href="#i-star"/></svg><span class="edit">形状图层 1</span></div></td>
                  <td><div class="cell sw"><span class="slot"><svg><use href="#i-shy"/></svg></span><span class="slot off"><svg><use href="#i-sun"/></svg></span><span class="slot"><svg><use href="#i-slash"/></svg></span><span></span><span></span><span class="slot"></span><span class="slot"></span><span class="slot"></span></div></td>
                  <td><div class="cell"><span class="dd w59"><select aria-label="模式"><option>正常</option></select></span><span class="slot t"></span></div></td>
                  <td><div class="cell par"><svg class="whip"><use href="#i-whip"/></svg><span class="dd"><select aria-label="父级"><option>无</option></select></span></div></td>
                  <td class="end"></td>
                </tr>
                <tr class="prop">
                  <td></td>
                  <td></td>
                  <td><div class="cell dotc">·</div></td>
                  <td><div class="cell pname"><svg><use href="#i-watch"/></svg><span>X 位置</span></div></td>
                  <td><div class="cell val">25.0</div></td>
                  <td></td>
                  <td><div class="cell"><svg class="whip far"><use href="#i-whip"/></svg></div></td>
                  <td class="end"></td>
                </tr>
                <tr class="prop">
                  <td><div class="cell nav"><i class="kp"></i><i class="kd"></i><i class="kn"></i></div></td>
                  <td></td>
                  <td><div class="cell dotc">·</div></td>
                  <td><div class="cell pname"><svg class="blue"><use href="#i-watchon"/></svg><svg class="cur"><use href="#i-curve"/></svg><span class="sel">Y 位置</span></div></td>
                  <td><div class="cell val">25.0</div></td>
                  <td></td>
                  <td><div class="cell"><svg class="whip far"><use href="#i-whip"/></svg></div></td>
                  <td class="end"></td>
                </tr>
              </tbody>
            </table>
          </div>

          <div class="tl-right">
            <div class="graph-wrap">
              <svg class="graph" viewBox="0 0 602 265">
                <defs>
                  <marker id="key" markerWidth="5" markerHeight="5" refX="2.500" refY="2.500" markerUnits="userSpaceOnUse"><path d="M0 0h5v5H0z" fill="#00ff37"/></marker>
                </defs>
                <!-- navigator -->
                <path d="M1 5h594v10H1z" fill="#000"/>
                <path d="M8 6h587v8H8z" fill="#666"/>
                <path d="M7 6v8H1.500V9l2-3zM9 6h-1.500v8H9zM596 6h3l3 3v5h-6z" fill="#2d8ceb"/>
                <g class="ruler">
                  <text x="1" y="25">0000</text>
                  <text x="51" y="25">00010</text><text x="109" y="25">00020</text><text x="166" y="25">00030</text><text x="224" y="25">00040</text><text x="281" y="25">00050</text><text x="339" y="25">00060</text><text x="397" y="25">00070</text><text x="454" y="25">00080</text><text x="512" y="25">00090</text><text x="569" y="25">00100</text>
                </g>
                <path d="M66.500 29v5M124.500 29v5M181.500 29v5M239.500 29v5M296.500 29v5M354.500 29v5M411.500 29v5M469.500 29v5M526.500 29v5M584.500 29v5" stroke="#777"/>
                <!-- work area -->
                <path d="M0 34h602v17H0z" fill="#000"/>
                <path d="M8 35h587v15H8z" fill="#5e5e5e"/>
                <path d="M7 35v15H2V38l3-3zM596 35h3l3 3v12h-6z" fill="#2d8ceb"/>
                <path d="M8 51h587v3H8z" fill="#19b926"/>
                <path d="M0 54h602v1H0z" fill="#000"/>
                <path d="M8 55h587v201H8z" fill="#323232"/>
                <path d="M66.500 55v201M124.500 55v201M181.500 55v201M239.500 55v201M296.500 55v201M353.500 55v201M411.500 55v201M468.500 55v201M526.500 55v201M583.500 55v201M0 58.500h602M0 96.500h602M0 135.500h602M0 174.500h602M0 213.500h602M0 251h602" stroke="#1a1a1a"/>
                <g class="scale">
                  <text x="10" y="93">400</text><text x="10" y="132">300</text><text x="10" y="170">200</text><text x="10" y="209">100</text><text x="10" y="247">0</text>
                </g>
                <path d="M0 242.500h3" stroke="#00ff37"/>
                <polyline points="8.500,242.500 37.500,69.500 66.500,242.500 95.500,69.500 124.500,242.500 152.500,69.500 181.500,242.500 210.500,69.500 239.500,242.500 267.500,69.500 296.500,242.500 325.500,69.500 353.500,242.500 382.500,69.500 411.500,242.500 440.500,69.500 468.500,242.500 497.500,69.500 526.500,242.500 555.500,69.500 583.500,242.500" fill="none" stroke="#00ff37" stroke-width="2" marker-start="url(#key)" marker-mid="url(#key)" marker-end="url(#key)"/>
                <path d="M583.500 242.500L601 137" stroke="#00ff37" stroke-width="2"/>
                <path d="M3 21h11v5l-5.500 7L3 26z" fill="#2d8ceb"/>
                <path d="M7 26h3v1H9v2H8v-2H7z" fill="#123"/>
                <path d="M8.500 32v224" stroke="#2d8ceb"/>
              </svg>
              <ul class="popup">
                <li><button>自动选择图表类型</button></li>
                <li class="ticked"><button>编辑值图表</button></li>
                <li><button>编辑速度图表</button></li>
                <li><button>显示参考图表</button></li>
                <li class="rule"></li>
                <li><button>显示音频波形</button></li>
                <li><button>显示图层的入点/出点</button></li>
                <li><button>显示图层标记</button></li>
                <li class="ticked"><button>显示图表工具技巧</button></li>
                <li><button>显示表达式编辑器</button></li>
                <li class="rule"></li>
                <li><button>允许帧之间的关键帧</button></li>
              </ul>
              <div class="graph-tools">
                <div>
                  <button aria-label="显示属性"><svg><use href="#i-eye"/></svg></button>
                  <button class="on white" aria-label="图表类型"><svg><use href="#i-list"/></svg></button>
                  <button class="on" aria-label="变换框"><svg><use href="#i-bbox"/></svg></button>
                  <button class="on" aria-label="对齐"><svg><use href="#i-magnet"/></svg></button>
                </div>
                <div>
                  <button class="on" aria-label="自动缩放"><svg><use href="#i-fitv"/></svg></button>
                  <button class="off" aria-label="适合选区"><svg><use href="#i-fitsel"/></svg></button>
                  <button aria-label="适合全部"><svg><use href="#i-fitall"/></svg></button>
                </div>
                <div><button class="on" aria-label="单独尺寸"><svg><use href="#i-sepdim"/></svg></button></div>
                <div>
                  <button class="off" aria-label="编辑关键帧"><svg><use href="#i-key"/></svg></button>
                  <button class="off" aria-label="定格"><svg><use href="#i-hold"/></svg></button>
                  <button class="off" aria-label="线性"><svg><use href="#i-linear"/></svg></button>
                  <button class="off" aria-label="自动贝塞尔"><svg><use href="#i-auto"/></svg></button>
                </div>
                <div>
                  <button class="off" aria-label="缓动"><svg><use href="#i-ease"/></svg></button>
                  <button class="off" aria-label="缓入"><svg><use href="#i-easein"/></svg></button>
                  <button class="off" aria-label="缓出"><svg><use href="#i-easeout"/></svg></button>
                </div>
              </div>
            </div>
            <div class="tl-side">
              <svg class="mk"><use href="#i-marker"/></svg>
              <svg class="bn"><use href="#i-bin"/></svg>
            </div>
          </div>
        </div>
        <div class="tl-foot">
          <div class="foot-left">
            <button class="blue" aria-label="图层开关"><svg><use href="#i-dup"/></svg></button>
            <button class="blue" aria-label="转换控制"><svg><use href="#i-modes"/></svg></button>
            <button aria-label="入点出点"><svg><use href="#i-brace"/></svg></button>
          </div>
          <div class="foot-zoom">
            <svg class="small"><use href="#i-mtn"/></svg>
            <input type="range" value="0" aria-label="时间缩放">
            <svg><use href="#i-mtn"/></svg>
          </div>
        </div>
      </section>
    </div>

    <aside class="right-area">
      <div class="upper-right">
        <section class="panel info">
          <div class="tabs">
            <a href="#" class="tab active">信息 <svg class="menu"><use href="#i-menu"/></svg></a>
            <a href="#" class="tab">音频</a>
          </div>
          <div class="info-top">
            <i class="color"></i>
            <dl class="rgba">
              <dt>R :</dt><dd></dd>
              <dt>G :</dt><dd></dd>
              <dt>B :</dt><dd></dd>
              <dt>A :</dt><dd>0.0000</dd>
            </dl>
            <i class="vline"></i>
            <span class="plus">+</span>
            <dl class="xy">
              <dt>X :</dt><dd>31</dd>
              <dt>Y :</dt><dd>569</dd>
            </dl>
          </div>
          <p class="info-text">形状图层 1<br>持续时间: 00102<br>入: 00000，出: 00101</p>
        </section>

        <section class="panel preview">
          <div class="tabs"><a href="#" class="tab lit">预览 <svg class="menu"><use href="#i-menu"/></svg></a></div>
          <div class="transport">
            <button aria-label="第一帧"><svg><use href="#i-first"/></svg></button>
            <button aria-label="上一帧"><svg><use href="#i-prev"/></svg></button>
            <button aria-label="播放"><svg><use href="#i-play"/></svg></button>
            <button aria-label="下一帧"><svg><use href="#i-next"/></svg></button>
            <button aria-label="最后一帧"><svg><use href="#i-last"/></svg></button>
          </div>
        </section>

        <section class="panel character">
          <div class="tabs">
            <a href="#" class="tab">效果和预设</a>
            <a href="#" class="tab active">字符 <svg class="menu"><use href="#i-menu"/></svg></a>
            <svg class="more"><use href="#i-more"/></svg>
          </div>
          <div class="char-top">
            <div class="fonts">
              <span class="dd split"><select aria-label="字体"><option>鸿雷行书简体</option></select></span>
              <span class="dd split"><select aria-label="样式"><option>-</option></select></span>
            </div>
            <div class="pick">
              <button aria-label="吸管"><svg><use href="#i-dropper"/></svg></button>
              <i class="bw"></i>
            </div>
            <svg class="fillstroke" viewBox="0 0 44 44">
              <path d="M13.500 13.500h30v30h-30z" fill="#fff" stroke="#000"/>
              <path d="M23 23h11v11H23z" fill="#232323" stroke="#000"/>
              <path d="M14 43L43 14" stroke="#c40f14" stroke-width="2"/>
              <path d="M.5.500h29v29H.5z" fill="#fff" stroke="#000"/>
              <path d="M1.500 31h10v10h-10z" fill="#fff" stroke="#999"/>
              <path d="M2 40l9-9" stroke="#c40f14"/>
              <g transform="translate(31 1)" fill="#b0b0b0"><path d="M2 3.500c5-1 6 1 6 5" fill="none" stroke="#b0b0b0" stroke-width="2"/><path d="M0 3.500L4 0v7zM4.500 7H12l-4 4z"/></g>
            </svg>
          </div>
          <hr>
          <div class="crow"><svg><use href="#c-size"/></svg><span><b>90</b> 像素</span><i class="tri"></i><svg><use href="#c-lead"/></svg><span class="blue">自动</span><i class="tri"></i></div>
          <div class="crow"><svg><use href="#c-kern"/></svg><span class="faint">度量标准</span><i class="tri"></i><svg><use href="#c-track"/></svg><span><b>0</b></span><i class="tri"></i></div>
          <hr>
          <div class="crow tall"><svg><use href="#c-stroke"/></svg><span><b>-</b> 像素</span><i class="tri"></i><span class="dd"><select aria-label="描边方式"><option></option></select></span></div>
          <hr>
          <div class="crow"><svg><use href="#c-vscale"/></svg><span><b>100</b> <small>%</small></span><i class="tri"></i><svg><use href="#c-hscale"/></svg><span><b>100</b> <small>%</small></span><i class="tri"></i></div>
          <div class="crow"><svg><use href="#c-base"/></svg><span><b>0</b> 像素</span><i class="tri"></i><svg><use href="#c-tsume"/></svg><span><b>0</b> <small>%</small></span><i class="tri"></i></div>
          <hr>
          <div class="faux">
            <button><b>T</b></button>
            <button><em>T</em></button>
            <button>TT</button>
            <button>T<small>T</small></button>
            <button>T<sup>1</sup></button>
            <button>T<sub>1</sub></button>
          </div>
          <div class="char-checks">
            <label class="check"><input type="checkbox">连字</label>
            <label class="check"><input type="checkbox">印地语数字</label>
          </div>
        </section>
      </div>

      <section class="panel align">
        <div class="tabs">
          <a href="#" class="tab cut">跟踪器</a>
          <a href="#" class="tab active">对齐 <svg class="menu"><use href="#i-menu"/></svg></a>
          <a href="#" class="tab cut-end">段落</a>
          <svg class="more"><use href="#i-more"/></svg>
        </div>
        <div class="align-to"><label for="align-to">将图层对齐到:</label><span class="dd"><select id="align-to"><option>合成</option></select></span></div>
        <div class="align-icons">
          <button aria-label="左对齐"><svg><use href="#a-left"/></svg></button>
          <button aria-label="水平居中"><svg><use href="#a-hc"/></svg></button>
          <button aria-label="右对齐"><svg><use href="#a-right"/></svg></button>
          <button aria-label="顶对齐"><svg><use href="#a-top"/></svg></button>
          <button aria-label="垂直居中"><svg><use href="#a-vc"/></svg></button>
          <button aria-label="底对齐"><svg><use href="#a-bottom"/></svg></button>
        </div>
        <p class="dist-label">分布图层:</p>
        <div class="align-icons off">
          <button aria-label="按顶分布"><svg><use href="#d-top"/></svg></button>
          <button aria-label="垂直分布"><svg><use href="#d-vc"/></svg></button>
          <button aria-label="按底分布"><svg><use href="#d-bottom"/></svg></button>
          <button aria-label="按左分布"><svg><use href="#d-left"/></svg></button>
          <button aria-label="水平分布"><svg><use href="#d-hc"/></svg></button>
          <button aria-label="按右分布"><svg><use href="#d-right"/></svg></button>
        </div>
      </section>
    </aside>
  </main>
</body>
</html>
```
FILE: styles.css
```css
* {
  box-sizing: border-box;
}
body {
  margin: 0;
  height: 100vh;
  display: flex;
  flex-direction: column;
  background: #161616;
  color: #8a8a8a;
  font-family: "Noto Sans CJK SC", sans-serif;
  font-size: 13px;
  line-height: 16px;
  overflow: hidden;
}
a {
  color: inherit;
  text-decoration: none;
  white-space: nowrap;
}
button, input, select {
  font: inherit;
  color: inherit;
  margin: 0;
  padding: 0;
  border: 0;
  background: none;
}
button {
  display: flex;
  align-items: center;
  justify-content: center;
  color: #b0b0b0;
}
svg {
  fill: currentColor;
  flex: none;
}
.sprite {
  position: absolute;
  width: 0;
  height: 0;
}
.blue, button.blue {
  color: #2d8ceb;
}
.menu {
  width: 9px;
  height: 9px;
  margin-left: 9px;
}
.more {
  width: 11px;
  height: 9px;
  color: #b0b0b0;
}
.sep {
  flex: none;
  width: 1px;
  height: 20px;
  margin: 0 3px;
  background: #333;
}
.swatch {
  flex: none;
  width: 10px;
  height: 10px;
}
.blue-sw { background: #6a7fe0; }
.tan-sw { background: #a89676; }
.x {
  width: 6px;
  color: #8a8a8a;
  font-size: 11px;
}
.tri {
  width: 0;
  height: 0;
  border: 3px solid transparent;
  border-top: 6px solid #8a8a8a;
  border-bottom: 0;
}
.vline {
  width: 1px;
  background: #333;
}

/* menu bar */
.menubar {
  flex: none;
  display: flex;
  height: 21px;
  padding-left: 4px;
  gap: 14px;
  align-items: center;
  background: #fff;
  border-top: 1px solid #0cc6cc;
  border-bottom: 2px solid #e6ebea;
  color: #000;
  font-size: 12px;
}

/* tool bar */
.toolbar {
  flex: none;
  display: flex;
  align-items: center;
  height: 25px;
  margin-bottom: 4px;
  background: #232323;
  padding-right: 4px;
}
.grip {
  width: 3px;
  height: 20px;
  margin-left: 2px;
  background: repeating-linear-gradient(#3a3a3a 0 1px, #232323 1px 2px);
}
.tool {
  position: relative;
  width: 25px;
  height: 22px;
}
.tool svg {
  width: 19px;
  height: 19px;
}
.tool.home {
  width: 29px;
}
.tool.on, .mode-star {
  background: #161616;
  border-radius: 3px;
}
.tool.sub::after {
  content: "";
  position: absolute;
  right: 1px;
  bottom: 1px;
  border: 2px solid transparent;
  border-right-color: #b0b0b0;
  border-bottom-color: #b0b0b0;
}
.shape-opts {
  display: flex;
  align-items: center;
  margin-left: 24px;
  padding-left: 19px;
  border-left: 1px solid #333;
  white-space: nowrap;
}
.mode-star {
  width: 20px;
  height: 20px;
}
button.mode-star {
  color: #2d8ceb;
}
.mode-star svg {
  width: 14px;
  height: 14px;
}
.mode-mask {
  width: 20px;
  margin-right: 12px;
}
.mode-mask svg {
  width: 14px;
  height: 14px;
}
.shape-opts .sep + a {
  margin-left: 6px;
}
.fill-swatch, .stroke-swatch {
  width: 24px;
  height: 18px;
  border: 1px solid #888;
  background: #d6d6d6;
  margin-left: 1px;
}
.stroke-swatch {
  background: #1a1a1a;
  box-shadow: inset 0 0 0 3px #555;
}
.stroke-swatch svg {
  width: 22px;
  height: 16px;
}
.stroke-label {
  margin-left: 14px;
}
.px {
  margin-left: 13px;
}
.px b {
  font-weight: 400;
  margin-right: 3px;
}
.add {
  margin-left: 16px;
}
.add-btn {
  margin: 0 1px 0 3px;
}
.add-btn svg {
  width: 12px;
  height: 12px;
}
.shape-opts .check {
  margin-left: 12px;
}
.check {
  display: flex;
  align-items: center;
  gap: 4px;
  white-space: nowrap;
}
.check input {
  appearance: none;
  width: 14px;
  height: 14px;
  border: 2px solid #8a8a8a;
  border-radius: 2px;
}
.spaces {
  display: flex;
  align-items: center;
  margin-left: auto;
}
.sp-default { margin-right: 46px; }
.sp-std { margin-right: 24px; }
.sp-std .menu { margin-left: 10px; }
.sp-small { margin-right: 44px; }
.sp-lib { margin-right: 47px; }
.sp-learn { margin-right: 39px; }
.sync {
  margin: 0 12px 0 2px;
}
.spaces .more {
  margin-right: 7px;
}
.sync svg {
  width: 20px;
  height: 14px;
}
.searchbox {
  display: flex;
  align-items: center;
  height: 20px;
  background: #161616;
  border: 1px solid #303030;
  border-radius: 3px;
  color: #b0b0b0;
}
.searchbox svg {
  width: 18px;
  height: 14px;
  margin-left: 6px;
}
.searchbox input {
  flex: 1;
  min-width: 0;
  outline: 0;
}
.searchbox.help {
  width: 194px;
  font-size: 12px;
}
.searchbox.help svg {
  margin: 0 6px 0 4px;
}
.searchbox input::placeholder {
  color: #c8c8c8;
  opacity: 1;
}

/* dock layout */
.workspace {
  flex: 1;
  min-height: 0;
  display: flex;
  gap: 4px;
}
.left-area {
  flex: 1;
  min-width: 0;
  display: flex;
  flex-direction: column;
  gap: 4px;
}
.upper {
  flex: 1;
  min-height: 0;
  display: flex;
  gap: 4px;
}
.right-area {
  width: 206px;
  display: flex;
  flex-direction: column;
  gap: 4px;
}
.upper-right {
  flex: 1;
  display: flex;
  flex-direction: column;
  gap: 4px;
}
.panel {
  background: #232323;
  overflow: hidden;
}
.tabs {
  display: flex;
  height: 26px;
  align-items: stretch;
}
.tab {
  display: flex;
  align-items: center;
  padding-top: 2px;
  border-bottom: 2px solid transparent;
}
.tab.active, .tab.lit {
  color: #c8c8c8;
}
.tab.active {
  border-bottom-color: #c8c8c8;
}
.tabs .more {
  margin: 8px 4px 0 auto;
}

/* drop-downs */
.dd {
  position: relative;
  display: block;
  height: 19px;
  background: #1b1b1b;
  border: 1px solid #303030;
  border-radius: 3px;
  color: #b8b8b8;
}
.dd select {
  display: block;
  appearance: none;
  width: 100%;
  height: 100%;
  padding: 0 14px 0 6px;
  outline: 0;
}
.dd option {
  background: #232323;
}
.dd::after {
  content: "";
  position: absolute;
  right: 7px;
  top: 50%;
  width: 5px;
  height: 5px;
  margin-top: -4px;
  border-right: 1px solid #a0a0a0;
  border-bottom: 1px solid #a0a0a0;
  transform: rotate(45deg);
  pointer-events: none;
}
.w59 { width: 59px; }
.w70 { width: 70px; }
.w86 { width: 86px; }
.w106 { width: 106px; }

/* project */
.project {
  width: 318px;
  display: flex;
  flex-direction: column;
}
.project .tabs {
  padding-left: 9px;
}
.project .tab.active {
  padding-left: 3px;
}
.project .tab .menu {
  margin-left: 8px;
}
.fx-tab {
  margin-left: 37px;
}
.fx-tab .swatch {
  margin-right: 11px;
}
.project .tabs .vline {
  margin: 4px 0 2px auto;
}
.project .tabs .more {
  margin-left: 25px;
}
.item-info {
  display: flex;
  height: 113px;
  padding: 5px 4px;
  gap: 5px;
}
.thumb {
  width: 8px;
  height: 66px;
  margin-top: 3px;
  background: radial-gradient(circle at 4px 4px, #d6d6d6 3px, #000 4px);
}
.item-text {
  display: flex;
  flex-direction: column;
  font-size: 11px;
  line-height: 13px;
  color: #a0a0a0;
}
.item-text strong {
  display: flex;
  align-items: center;
  gap: 8px;
  height: 15px;
  font-size: 12px;
  color: #b8b8b8;
}
.item-text .tri {
  border-top-color: #fff;
  border-left-width: 4px;
  border-right-width: 4px;
}
.project .searchbox {
  margin: 0 6px 6px 4px;
}
.list-head {
  height: 20px;
  margin-right: 1px;
  padding: 1px 0 0 22px;
  background: #323232;
  border: solid #000;
  border-width: 1px 0;
  color: #c8c8c8;
}
.list-row {
  display: flex;
  align-items: center;
  height: 19px;
  padding-left: 15px;
}
.comp-ico {
  width: 17px;
  height: 13px;
  color: #c8c8c8;
}
.list-name {
  flex: 1;
  height: 18px;
  padding-left: 3px;
  background: #a0a0a0;
  color: #222;
  font-size: 12px;
  font-weight: 700;
  line-height: 18px;
}
.tree-ico {
  width: 14px;
  height: 12px;
  margin: 0 2px;
  color: #b0b0b0;
}
.project-bar {
  display: flex;
  align-items: center;
  height: 18px;
  margin-top: auto;
  border-top: 1px solid #000;
}
.project-bar button {
  width: 25px;
}
.project-bar svg {
  width: 17px;
  height: 13px;
}
.project-bar .bpc {
  width: 51px;
  height: 16px;
  border: 1px solid #303030;
  border-radius: 3px;
  font-size: 10px;
  color: #8a8a8a;
}
.pill {
  width: 54px;
  height: 15px;
  border-radius: 8px;
  background: #303030;
}

/* composition viewer */
.viewer {
  flex: 1;
  min-width: 0;
  display: flex;
  flex-direction: column;
}
.viewer .tabs {
  padding-left: 11px;
}
.viewer .tab .swatch {
  margin: 0 11px 0 9px;
}
.viewer .tab .menu {
  margin-left: 10px;
}
.lock {
  width: 10px;
  height: 11px;
  margin-right: 9px;
  color: #b0b0b0;
}
.viewer .dim {
  color: #8a8a8a;
  margin-right: 5px;
}
.layer-tab {
  margin-left: 37px;
}
.crumbs {
  height: 27px;
  padding: 4px 0 0 19px;
  border-bottom: 1px solid #000;
}
.crumb {
  display: block;
  width: 70px;
  height: 18px;
  padding-left: 10px;
  background: #1b1b1b;
  border: 1px solid #303030;
  border-radius: 3px;
  color: #2d8ceb;
}
.canvas {
  flex: 1;
  min-height: 0;
  display: flex;
  align-items: center;
  justify-content: center;
}
.stage {
  width: 60px;
  height: 510px;
}
.viewer-bar {
  display: flex;
  align-items: center;
  height: 24px;
  padding: 0 0 1px 1px;
  border-top: 1px solid #000;
  font-size: 13px;
}
.viewer-bar button {
  width: 22px;
  height: 19px;
}
.viewer-bar svg {
  width: 16px;
  height: 14px;
}
.viewer-bar .on, .graph-tools .on {
  color: #2d8ceb;
  background: #1b1b1b;
  border-radius: 3px;
}
.viewer-bar .off {
  color: #444;
}
.viewer-bar .time {
  width: 70px;
  border: 1px solid #303030;
  border-radius: 3px;
  background: #1b1b1b;
  font-size: 11px;
  color: #8a8a8a;
}
.viewer-bar .w106 {
  margin: 0 2px 0 1px;
}
.viewer-bar .w70 select {
  font-size: 12px;
}
.viewer-bar .expo {
  width: 20px;
}
.viewer-bar a {
  font-size: 11px;
}

/* script panels */
.scripts {
  width: 173px;
  display: flex;
  flex-direction: column;
  gap: 4px;
  font-size: 12px;
}
.motion {
  height: 338px;
  display: flex;
  flex-direction: column;
}
.align3d {
  flex: 1;
  display: flex;
  flex-direction: column;
}
.scripts .tabs {
  padding-left: 13px;
  height: 28px;
  color: #b8b8b8;
}
.scripts .menu {
  margin-left: 8px;
}
.box {
  flex: 1;
  margin: 0 1px 1px;
  border: 1px solid #303030;
  border-radius: 3px;
  overflow: hidden;
}
.motion-top, .task {
  display: flex;
  align-items: center;
  gap: 9px;
  padding: 1px 0 0 1px;
}
.motion-top .dd, .task .dd {
  width: 134px;
  height: 24px;
}
.corner {
  margin-left: 14px;
  border: 5px solid transparent;
  border-right-color: #b0b0b0;
  border-bottom-color: #b0b0b0;
}
.motion-top {
  margin-bottom: 11px;
}
.ease-row {
  display: flex;
  align-items: center;
  height: 26px;
  padding-left: 7px;
  color: #c8c8c8;
}
.ease-row svg {
  width: 10px;
  height: 8px;
  margin-right: 10px;
}
input[type=range] {
  appearance: none;
  height: 16px;
  min-width: 0;
  outline: 0;
}
input[type=range]::-webkit-slider-runnable-track {
  height: 2px;
  background: #464646;
}
input[type=range]::-webkit-slider-thumb {
  appearance: none;
  width: 15px;
  height: 15px;
  margin-top: -7px;
  border: 2px solid #8a8a8a;
  border-radius: 50%;
  background: #232323;
  box-shadow: 0 0 0 2px #232323;
}
.ease-row input[type=range] {
  width: 103px;
}
.num {
  height: 19px;
  width: 43px;
  padding-left: 5px;
  background: #161616;
  border: 1px solid #303030;
  border-radius: 3px;
  color: #b8b8b8;
}
.ease-row .num {
  margin: 0 -16px 0 13px;
}
.motion-grid {
  display: grid;
  grid-template-columns: 73px 70px 1fr;
  grid-auto-rows: 26px;
  margin: 6px 0 8px 6px;
}
.motion-grid button {
  justify-content: flex-start;
  gap: 3px;
  color: #c8c8c8;
  font: 700 9px "Noto Sans", sans-serif;
  text-shadow: 1px 0 #000, -1px 0 #000, 0 1px #000, 0 -1px #000;
}
.motion-grid svg {
  width: 16px;
  height: 14px;
}
.task {
  padding-left: 2px;
}
.task button {
  width: 40px;
  height: 24px;
  margin-right: -20px;
  border: 1px solid #6a6a6a;
}
.align3d .box {
  padding: 4px 2px 0;
  font-size: 11px;
  line-height: 12px;
}
fieldset {
  margin: 0 0 4px;
  padding: 0;
  height: 30px;
  min-width: 0;
  border: 1px solid #303030;
  border-radius: 3px;
}
legend {
  margin-left: 7px;
  padding: 0 5px;
  height: 12px;
}
.frow {
  display: flex;
  align-items: center;
  justify-content: space-between;
  height: 19px;
  margin-top: -2px;
  padding: 0 1px;
}
.frow input[type=range] {
  flex: 1;
  margin-right: 9px;
}
.frow.in9 {
  padding-left: 10px;
}
.frow label {
  display: flex;
  align-items: center;
  gap: 4px;
}
.frow.three, .frow.two, .frow.half {
  height: 13px;
  margin-top: 0;
}
.three label {
  width: 54px;
}
.frow.two, .frow.half {
  justify-content: flex-start;
  gap: 12px;
}
.frow.half {
  gap: 40px;
}
input[type=radio] {
  appearance: none;
  width: 14px;
  height: 14px;
  border: 2px solid #8a8a8a;
  border-radius: 50%;
}
input[type=radio]:checked {
  background: #8a8a8a;
}
fieldset.outer {
  height: 65px;
  margin-bottom: 1px;
}
fieldset.inner {
  margin: 8px 1px 0;
  color: #464646;
}
.inner .num {
  color: #464646;
  background: #262626;
  border-color: #262626;
}
.inner input[type=range]::-webkit-slider-thumb {
  border-color: #464646;
}
.opts {
  display: flex;
  gap: 11px;
  height: 27px;
  margin-bottom: 1px;
  padding-left: 1px;
  border: 1px solid #303030;
  border-radius: 3px;
}
.opts .check {
  margin-bottom: 2px;
}
.apply-row {
  display: flex;
  gap: 10px;
}
.apply-row button {
  width: 25px;
  height: 20px;
  border: 1px solid #707070;
  color: #8a8a8a;
}
.apply-row .apply {
  flex: 1;
  font-size: 12px;
}

/* info / preview */
.info {
  height: 142px;
}
.info .tabs, .preview .tabs {
  padding-left: 11px;
  gap: 24px;
}
.info .tab .menu, .preview .tab .menu {
  margin-left: 10px;
}
.info .tab.active, .tab.lit {
  padding-left: 2px;
}
.info-top {
  display: flex;
  height: 66px;
  margin: 0 8px 3px 6px;
  padding: 6px 0 0 2px;
  border-bottom: 2px solid #303030;
  font-size: 11px;
  line-height: 13px;
}
.color {
  width: 20px;
  height: 20px;
  margin: 13px 6px 0 0;
  background: #000;
}
.info dl {
  display: grid;
  grid-template-columns: 19px 1fr;
  grid-auto-rows: 13px;
  margin: 0;
}
.info dl.xy {
  grid-template-columns: 16px 1fr;
}
.info dt {
  white-space: nowrap;
}
.info dd {
  margin: 0;
}
.rgba {
  width: 68px;
}
.info-top .vline {
  width: 2px;
  height: 50px;
  margin-top: 3px;
}
.plus {
  margin: 20px 4px 0 7px;
  font-size: 17px;
  color: #c8c8c8;
}
.info-text {
  margin: 0 0 0 9px;
  font-size: 12px;
  line-height: 14px;
}
.preview {
  height: 56px;
}
.transport {
  display: flex;
  justify-content: center;
  gap: 11px;
  margin-top: 11px;
  padding-right: 6px;
}
.transport svg {
  width: 13px;
  height: 10px;
}

/* character */
.character {
  flex: 1;
  padding: 0 5px;
}
.character .tabs {
  margin-left: -3px;
}
.character .tab.active {
  margin-left: 41px;
  padding-left: 2px;
}
.character .tab .menu, .align .tab .menu {
  margin-left: 10px;
}
.character .tabs .more {
  margin-right: -1px;
}
.char-top {
  display: flex;
  margin-top: 10px;
}
.fonts {
  display: flex;
  flex-direction: column;
  gap: 5px;
  flex: 1;
}
.fonts .dd select {
  padding-left: 8px;
}
.dd.split::before {
  content: "";
  position: absolute;
  right: 18px;
  top: 0;
  bottom: 0;
  border-left: 1px solid #303030;
}
.pick {
  margin: 0 5px 0 4px;
}
.pick svg {
  width: 18px;
  height: 18px;
}
.pick .bw {
  display: block;
  width: 20px;
  height: 17px;
  margin-top: 7px;
  border: 1px solid #b0b0b0;
  background: linear-gradient(#000 50%, #b0b0b0 50% 60%, #fff 60%);
}
.fillstroke {
  width: 44px;
  height: 44px;
}
hr {
  height: 2px;
  margin: 6px 0 0;
  border: 0;
  background: #303030;
}
.char-top + hr {
  margin-top: 5px;
}
.crow {
  display: grid;
  grid-template-columns: 25px 53px 28px 25px 1fr 11px;
  align-items: center;
  height: 21px;
  white-space: nowrap;
}
.crow svg {
  width: 19px;
  height: 18px;
}
.crow.tall {
  height: 24px;
}
.crow.tall svg {
  height: 13px;
}
.crow b {
  color: #2d8ceb;
  font-size: 12px;
  font-weight: 400;
}
.crow small {
  font-size: 11px;
}
.crow .tri {
  justify-self: center;
}
.crow .tri:nth-child(3) {
  justify-self: start;
  margin-left: 2px;
}
.crow .faint {
  color: #464646;
}
.crow.tall .dd {
  grid-column: 4 / -1;
  margin-left: -17px;
}
.faux {
  display: flex;
  height: 26px;
  padding-left: 18px;
}
.faux button {
  width: 27px;
  font-family: "Liberation Serif", serif;
  font-size: 16px;
}
.faux small, .faux sup, .faux sub {
  font-size: 10px;
}
.faux small {
  padding-top: 4px;
}
.faux sup {
  padding-bottom: 6px;
}
.faux sub {
  padding-top: 8px;
}
.char-checks {
  display: grid;
  grid-template-columns: 98px 1fr;
  height: 26px;
  padding-left: 6px;
}

/* align */
.align {
  height: 333px;
}
.cut {
  width: 36px;
  direction: rtl;
  overflow: hidden;
}
.align .tab.active {
  margin-left: 40px;
  padding-left: 2px;
}
.cut-end {
  width: 19px;
  margin-left: 25px;
  overflow: hidden;
  border-right: 1px solid #333;
}
.align-to {
  display: flex;
  align-items: center;
  gap: 2px;
  height: 19px;
  margin: 5px 2px 0 8px;
  white-space: nowrap;
}
.align-to .dd {
  flex: 1;
}
.align-icons {
  display: flex;
  justify-content: space-between;
  margin: 5px 5px 0 6px;
  padding: 0 2px 4px 4px;
  border-bottom: 2px solid #303030;
}
.align-icons svg {
  width: 18px;
  height: 18px;
}
.align-icons.off {
  border: 0;
  margin-top: 3px;
}
.align-icons.off button {
  color: #3c3c3c;
}
.dist-label {
  margin: 0 0 0 8px;
}

/* timeline */
.timeline {
  height: 333px;
  display: flex;
  flex-direction: column;
  border: solid #2d8ceb;
  border-width: 1px 1px 1px 0;
}
.timeline .tabs {
  height: 27px;
  padding-left: 8px;
  align-items: center;
  color: #c8c8c8;
}
.timeline .tabs .tab {
  padding: 0;
  border: 0;
}
.timeline .tabs .swatch {
  margin: 0 13px 0 10px;
}
.timeline .tabs .menu {
  margin-left: 12px;
}
.tl-main {
  flex: 1;
  min-height: 0;
  display: flex;
}
.tl-left {
  flex: 1;
  min-width: 0;
}
.tl-tools {
  display: flex;
  align-items: center;
  height: 35px;
}
.tl-time {
  width: 151px;
  text-align: center;
  color: #2d8ceb;
}
.tl-time b {
  display: block;
  font-size: 14px;
}
.tl-time span {
  display: block;
  font: 10px/14px "Liberation Mono", monospace;
  color: #1b5088;
  padding-right: 4px;
}
.tl-tools .searchbox {
  flex: 1;
}
.tl-icons {
  display: flex;
  align-items: center;
  margin: 0 4px 0 6px;
}
.tl-icons button {
  width: 26px;
}
.tl-icons button:nth-child(1) {
  width: 36px;
}
.tl-icons button:nth-child(2) {
  width: 34px;
}
.tl-icons button:last-child {
  width: 43px;
}
.tl-icons svg {
  width: 17px;
  height: 15px;
}
.layers {
  width: 100%;
  table-layout: fixed;
  border-collapse: collapse;
}
.layers th, .layers td {
  padding: 0;
  font-weight: 400;
  text-align: left;
}
.c-av { width: 66px; }
.c-tag { width: 32px; }
.c-num { width: 28px; }
.c-sw { width: 147px; }
.c-mode { width: 144px; }
.c-parent { width: 117px; }
.c-end { width: 16px; }
.layers thead .cell {
  height: 20px;
  background: #323232;
  border: solid #000;
  border-width: 1px 0;
  color: #b8b8b8;
}
.cell {
  display: flex;
  align-items: center;
  height: 20px;
  white-space: nowrap;
}
.bar {
  width: 1px;
  height: 12px;
  background: #111;
}
.av svg, .sw svg {
  width: 12px;
  height: 12px;
}
.av {
  padding-left: 4px;
  gap: 3px;
}
thead .av svg:nth-child(3) {
  height: 8px;
}
.tag {
  width: 12px;
  height: 12px;
  margin-left: 13px;
}
.hash {
  margin-left: 6px;
  font-size: 11px;
}
.cell.name {
  gap: 7px;
}
.cell.name .bar {
  margin-left: 5px;
}
.sw {
  gap: 3px;
  padding-left: 5px;
}
thead .sw {
  padding-left: 0;
}
thead .sw .bar {
  margin-right: 1px;
}
.sw em {
  width: 12px;
  font: italic 14px "Liberation Serif", serif;
}
.mode .bar, .parent .bar {
  margin-right: 7px;
}
.m1 {
  width: 64px;
}
.m2 {
  width: 17px;
}
.m2, .m2 + span {
  font-size: 11px;
}
.layer td {
  background: #484848;
}
.layer .cell {
  height: 19px;
}
.av > span, .sw > span {
  width: 12px;
  height: 13px;
}
.slot {
  display: flex;
  align-items: center;
  justify-content: center;
  background: #323232;
  color: #b0b0b0;
}
.slot.off {
  color: #777;
}
.slot.t {
  width: 13px;
  height: 13px;
  margin-left: 5px;
}
.layers td.end {
  background: #232323;
}
.lab {
  gap: 6px;
  padding-left: 7px;
}
.chev {
  width: 5px;
  height: 5px;
  border-right: 1px solid #a0a0a0;
  border-bottom: 1px solid #a0a0a0;
  transform: rotate(45deg);
}
.label-sw {
  width: 15px;
  height: 15px;
  margin-right: -5px;
  background: #6a7fe0;
}
.idx {
  padding-left: 7px;
  font: 700 12px "Liberation Mono", monospace;
  color: #b8b8b8;
}
.lname svg {
  width: 11px;
  height: 11px;
  margin: 0 5px 0 11px;
  color: #b0b0b0;
}
.edit {
  flex: 1;
  height: 19px;
  padding-left: 2px;
  border: 2px solid #a0a0a0;
  font-size: 12px;
  font-weight: 700;
  line-height: 16px;
  color: #b8b8b8;
}
.layers .dd {
  height: 18px;
}
.par {
  padding-left: 5px;
}
.par .dd {
  flex: 1;
  margin: 0 1px 0 4px;
}
.whip {
  width: 14px;
  height: 12px;
  color: #a0a0a0;
}
.whip.far {
  margin-left: 17px;
}
.prop td {
  background: #262626;
  border-bottom: 1px solid #1f1f1f;
}
.prop .cell {
  height: 19px;
}
.dotc {
  padding-left: 14px;
  color: #444;
}
.pname {
  color: #a0a0a0;
  font-size: 11px;
}
.pname svg {
  width: 12px;
  height: 13px;
  margin: 0 7px 0 2px;
  color: #b0b0b0;
}
.pname svg.blue {
  color: #2d8ceb;
}
.pname .cur {
  margin: 0 4px 0 0;
}
.sel {
  flex: 1;
  height: 19px;
  padding-left: 4px;
  background: #4c4c4c;
  line-height: 19px;
}
.val {
  padding-left: 5px;
  font: 10px "Liberation Mono", monospace;
  color: #2d8ceb;
}
.nav {
  gap: 9px;
  padding-left: 6px;
}
.kp, .kn {
  border: 4px solid transparent;
  border-left: 0;
  border-right: 6px solid #505050;
}
.kn {
  border-right: 0;
  border-left: 6px solid #c8c8c8;
}
.kd {
  width: 6px;
  height: 6px;
  background: #2d8ceb;
  transform: rotate(45deg);
}
.tl-right {
  display: flex;
}
.graph-wrap {
  position: relative;
  border-right: 1px solid #1a1a1a;
}
.graph {
  display: block;
  width: 602px;
  height: 265px;
  font-size: 10px;
}
.graph text {
  fill: #9a9a9a;
}
.graph-tools {
  display: flex;
  gap: 26px;
  padding-left: 63px;
}
.graph-tools div {
  display: flex;
  gap: 1px;
}
.graph-tools button {
  width: 24px;
  height: 20px;
}
.graph-tools svg {
  width: 18px;
  height: 15px;
}
.graph-tools .on.white {
  color: #fff;
}
.graph-tools .off {
  color: #3c3c3c;
}
.tl-side {
  width: 16px;
  padding-top: 37px;
}
.tl-side svg {
  display: block;
  width: 12px;
  height: 14px;
  margin: 0 0 7px 2px;
  color: #b0b0b0;
}
.tl-side .bn {
  width: 14px;
  margin-left: 0;
}
.popup {
  position: absolute;
  left: 88px;
  top: 25px;
  width: 203px;
  margin: 0;
  padding: 1px 2px 3px;
  list-style: none;
  background: #f1f1f1;
  border: 1px solid #ccc;
  z-index: 2;
}
.popup button {
  width: 100%;
  height: 22px;
  padding-left: 32px;
  justify-content: flex-start;
  font-size: 12px;
  color: #000;
}
.popup .rule {
  height: 7px;
  margin-left: 28px;
  background: linear-gradient(#d4d4d4, #d4d4d4) 0 3px / 100% 1px no-repeat;
}
.popup .ticked {
  position: relative;
}
.popup .ticked::before {
  content: "";
  position: absolute;
  left: 0;
  width: 22px;
  height: 22px;
  background: #91c9f7;
}
.popup .ticked::after {
  content: "";
  position: absolute;
  left: 9px;
  top: 5px;
  width: 4px;
  height: 8px;
  border: solid #222;
  border-width: 0 1px 1px 0;
  transform: rotate(40deg);
}
.tl-foot {
  display: flex;
  height: 17px;
  border-top: 1px solid #000;
}
.foot-left {
  flex: 1;
  display: flex;
  gap: 6px;
  padding-left: 4px;
}
.foot-left svg {
  width: 12px;
  height: 12px;
}
.foot-zoom {
  display: flex;
  align-items: center;
  width: 619px;
  padding-left: 6px;
  gap: 11px;
  color: #b0b0b0;
}
.foot-zoom svg {
  width: 16px;
  height: 7px;
}
.foot-zoom .small {
  width: 10px;
  height: 4px;
}
.foot-zoom input {
  width: 50px;
}
.foot-zoom input[type=range]::-webkit-slider-thumb {
  width: 10px;
  height: 10px;
  margin-top: -4px;
}
```
